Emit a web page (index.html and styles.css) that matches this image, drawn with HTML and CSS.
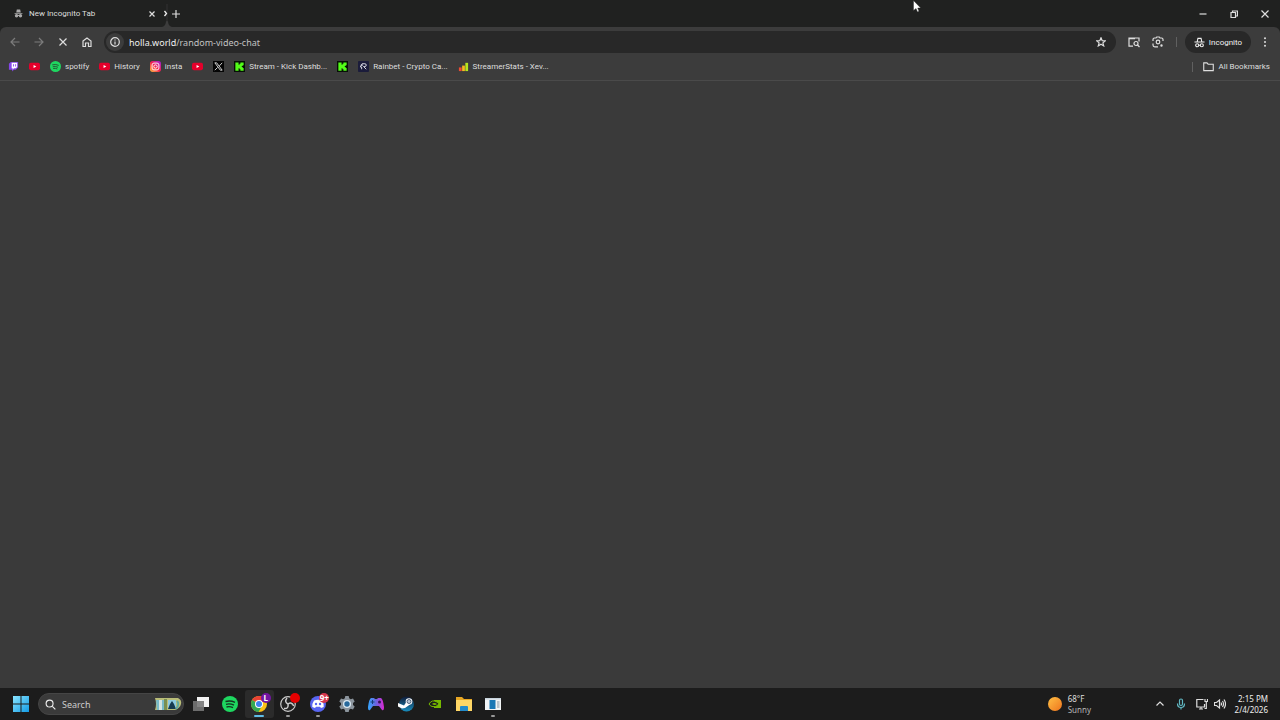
FILE: index.html
```html
<!DOCTYPE html>
<html lang="en">
<head>
    <meta charset="UTF-8">
    <meta name="viewport" content="width=device-width, initial-scale=1.0">
    <title>New Incognito Tab</title>
    <link rel="stylesheet" href="styles.css">
</head>
<body>
    <!-- Tab strip -->
    <header class="tab-strip">
        <div class="tab">
            <svg class="tab-icon" viewBox="0 0 16 16" fill="currentColor"><path d="M5 1h6l1 5H4zM1 7h14v1.500H1z"/><circle cx="4.500" cy="12" r="3"/><circle cx="11.500" cy="12" r="3"/><path d="M6 10.500h4v2H6z"/></svg>
            <span class="tab-title">New Incognito Tab</span>
            <button class="tab-close" aria-label="Close tab"><svg viewBox="0 0 8 8" class="line"><path d="M1.500 1.500l5 5M6.500 1.500l-5 5"/></svg></button>
        </div>
        <svg class="tab-edge" viewBox="0 0 10 27"><path d="M0 27Q4 26 4 21h2Q6 26 10 27z" fill="#3c3c3c"/><path d="M5 4v18" stroke="#333"/><path d="M2.500 11l2 2.500-2 2.500" fill="none" stroke="#eee" stroke-width="1.300"/></svg>
        <button class="new-tab" aria-label="New tab"><svg viewBox="0 0 8 8" class="line"><path d="M4 0v8M0 4h8"/></svg></button>
        <div class="window-buttons">
            <button aria-label="Minimize"><svg viewBox="0 0 8 8" class="line"><path d="M.5 4h7"/></svg></button>
            <button aria-label="Restore"><svg viewBox="0 0 8 8" class="line"><path d="M1 2.500h4.500v5H1zM2.500 2.500v-1.500h5v5h-2"/></svg></button>
            <button aria-label="Close"><svg viewBox="0 0 8 8" class="line"><path d="M.5.5l7 7M7.500.5l-7 7"/></svg></button>
        </div>
    </header>

    <!-- Toolbar -->
    <div class="toolbar">
        <div class="nav-buttons">
            <button class="dim" aria-label="Back"><svg viewBox="0 0 10 10" class="line"><path d="M9.500 5H1M5 1L1 5l4 4"/></svg></button>
            <button class="dim" aria-label="Forward"><svg viewBox="0 0 10 10" class="line"><path d="M.5 5H9M5 1l4 4-4 4"/></svg></button>
            <button aria-label="Stop"><svg viewBox="0 0 10 10" class="line"><path d="M1.500 1.500l7 7M8.500 1.500l-7 7"/></svg></button>
            <button aria-label="Home"><svg viewBox="0 0 10 10" class="line"><path d="M1 4l4-3 4 3v5.500H6.500V6h-3v3.500H1z"/></svg></button>
        </div>
        <div class="address-bar">
            <button class="site-info" aria-label="Site information"><svg viewBox="0 0 10 10" class="line"><circle cx="5" cy="5" r="4.300"/><path d="M5 4.500v3M5 2.500v1"/></svg></button>
            <a class="url" href="#"><b>holla.world</b>/random-video-chat</a>
            <button class="star" aria-label="Bookmark this tab"><svg viewBox="0 0 10 10" class="line"><path d="M5 .8l1.200 2.900 3.100.2-2.400 2 .8 3L5 7.300 2.300 8.900l.8-3-2.400-2 3.100-.2z"/></svg></button>
        </div>
        <div class="actions">
            <button aria-label="Search side panel"><svg viewBox="0 0 12 12" class="line"><path d="M5 10.200H1V2h10v3.500M1 2.600h6"/><circle cx="8" cy="7.500" r="2"/><path d="M9.500 9l2 2"/></svg></button>
            <button aria-label="Google Lens"><svg viewBox="0 0 12 12" class="line"><path d="M1 5V3.500Q1 2 2.500 2H4l.7-1h2.600L8 2h1.500Q11 2 11 3.500V5M1 7.500V9q0 1.800 1.800 1.800H6"/><circle cx="6" cy="6" r="1.800"/><circle cx="9.500" cy="9.500" r=".6"/></svg></button>
            <span class="divider"></span>
            <button class="incognito"><svg viewBox="0 0 12 12" class="line"><path d="M3.500 5l.8-3.500h3.400L8.500 5M.5 5.500h11M5 9h2"/><circle cx="3.500" cy="9" r="1.700"/><circle cx="8.500" cy="9" r="1.700"/></svg>Incognito</button>
            <button class="menu" aria-label="Menu"><svg viewBox="0 0 12 12" fill="currentColor"><circle cx="6" cy="1.500" r="1.200"/><circle cx="6" cy="6" r="1.200"/><circle cx="6" cy="10.500" r="1.200"/></svg></button>
        </div>
    </div>

    <!-- Bookmarks -->
    <nav class="bookmarks">
        <a href="#" aria-label="Twitch"><svg viewBox="0 0 12 12"><path d="M3 1h8v6L8.500 9.500H6.500L4.500 11.500v-2H1V3z" fill="#8547e8"/><path d="M4 2h6v4.500L8.500 8H6.500L5 9.500V8H4z" fill="#fff"/><path d="M6 3.500v2.500M8.300 3.500v2.500" stroke="#8547e8"/></svg></a>
        <a href="#" aria-label="YouTube"><svg viewBox="0 0 12 12"><rect y="2" width="12" height="8" rx="2" fill="#e4002b"/><path d="M5 4.300v3.400L8 6z" fill="#fff"/></svg></a>
        <a href="#"><svg viewBox="0 0 12 12"><circle cx="6" cy="6" r="6" fill="#1ed760"/><path d="M2.500 4.200q4-1 7 .6M3 6.300q3-.8 5.700.5M3.500 8.200q2.500-.6 4.500.5" fill="none" stroke="#244b30"/></svg>spotify</a>
        <a href="#"><svg viewBox="0 0 12 12"><rect y="2" width="12" height="8" rx="2" fill="#e4002b"/><path d="M5 4.300v3.400L8 6z" fill="#fff"/></svg>History</a>
        <a href="#"><svg viewBox="0 0 12 12"><defs><linearGradient id="insta" x1="0" y1="1" x2="1" y2="0"><stop stop-color="#ffc23d"/><stop offset=".5" stop-color="#f5204f"/><stop offset="1" stop-color="#9d22e5"/></linearGradient></defs><rect width="12" height="12" rx="3" fill="url(#insta)"/><rect x="2.300" y="2.300" width="7.400" height="7.400" rx="2" fill="none" stroke="#fff"/><circle cx="6" cy="6" r="1.800" fill="none" stroke="#fff"/></svg>insta</a>
        <a href="#" aria-label="YouTube"><svg viewBox="0 0 12 12"><rect y="2" width="12" height="8" rx="2" fill="#e4002b"/><path d="M5 4.300v3.400L8 6z" fill="#fff"/></svg></a>
        <a href="#" aria-label="X"><svg viewBox="0 0 12 12"><path d="M0 0h12v12H0z" fill="#050505"/><path d="M2 2h2l6 8H8zM10 2L7 5.300M5 7l-3 3" fill="none" stroke="#ddd"/></svg></a>
        <a href="#"><svg viewBox="0 0 12 12"><path d="M0 0h12v12H0z" fill="#071006"/><path d="M1.500 1.500H5v2.500h1V3h1V1.500h3.500v3h-1v1h-1v1h1v1h1v3H7V9H6V8H5v2.500H1.500z" fill="#53fc18"/></svg>Stream - Kick Dashb...</a>
        <a href="#" aria-label="Kick"><svg viewBox="0 0 12 12"><path d="M0 0h12v12H0z" fill="#071006"/><path d="M1.500 1.500H5v2.500h1V3h1V1.500h3.500v3h-1v1h-1v1h1v1h1v3H7V9H6V8H5v2.500H1.500z" fill="#53fc18"/></svg></a>
        <a href="#"><svg viewBox="0 0 12 12"><rect width="12" height="12" rx="1" fill="#1b1c3b"/><path d="M4 9V6.500H2.500L4.500 3h3Q9 3 9 4.500T7.500 6H6l3 3M3 4.500h2.500" fill="none" stroke="#e5e5ee"/></svg>Rainbet - Crypto Ca...</a>
        <a href="#"><svg viewBox="0 0 12 12"><path d="M1 7h3v4H1z" fill="#f04b32"/><path d="M4.500 5h3v6h-3z" fill="#f5b91f"/><path d="M8 2h3v9H8z" fill="#b5e61d"/></svg>StreamerStats - Xev...</a>
        <span class="divider"></span>
        <a class="all-bookmarks" href="#"><svg viewBox="0 0 12 12" class="line"><path d="M.8 2h3.500l1.300 1.500h5.600v7H.8z"/></svg>All Bookmarks</a>
    </nav>

    <!-- Blank page while loading -->
    <main class="page"></main>

    <!-- Taskbar -->
    <footer class="taskbar">
        <button class="start" aria-label="Start"><svg viewBox="0 0 16 16"><defs><linearGradient id="win" x2="1" y2="1"><stop stop-color="#8ae5ff"/><stop offset="1" stop-color="#139be5"/></linearGradient></defs><path d="M0 0h7.500v7.500H0zM8.500 0H16v7.500H8.500zM0 8.500h7.500V16H0zM8.500 8.500H16V16H8.500z" fill="url(#win)"/></svg></button>
        <label class="search">
            <svg class="search-icon line" viewBox="0 0 12 12"><circle cx="5" cy="5" r="3.800"/><path d="M8 8l3.300 3.300"/></svg>
            <input type="text" placeholder="Search" aria-label="Search">
            <svg class="search-art" viewBox="0 0 28 14"><path d="M1 1h23q4 2 3 6t-6 6H1q2-6 0-12z" fill="#b9bd78"/><path d="M2 3h10v10H3z" fill="#78b9c7"/><path d="M5 3h3v10H5z" fill="#d4e4df"/><path d="M10 2h3v11h-3z" fill="#788f50"/><path d="M14 3h8v9h-8z" fill="#8ecae0"/><path d="M18 4l2 3 2 5h-8l2-5z" fill="#173a50"/><path d="M23 4q3 3-1 8" stroke="#5fa8a0" stroke-width="2" fill="none"/></svg>
        </label>
        <div class="apps">
            <button aria-label="Task view"><svg viewBox="0 0 18 18"><path d="M5 2h12v10H5z" fill="#f2f2f2"/><path d="M1 6h11v10H1z" fill="#777" opacity=".9"/></svg></button>
            <button aria-label="Spotify"><svg viewBox="0 0 18 18"><circle cx="9" cy="9" r="8" fill="#1ed760"/><path d="M4.500 6.500q5-1.300 9.500.8M5 9.300q4-1 8 .8M5.500 12q3.500-.8 6.500.7" fill="none" stroke="#14351f" stroke-width="1.300"/></svg></button>
            <button class="active" aria-label="Chrome"><svg viewBox="0 0 18 18"><circle cx="9" cy="9" r="8" fill="#fbc116"/><path d="M9 9L2.100 5A8 8 0 0 1 15.900 5z" fill="#e94235"/><path d="M9 9L2.100 5A8 8 0 0 0 8.500 17L12 11z" fill="#34a853"/><path d="M9 5h6.900l-1-1.500H9z" fill="#e94235"/><circle cx="9" cy="9" r="4" fill="#fff"/><circle cx="9" cy="9" r="3" fill="#3c82ef"/></svg><span class="badge purple">L</span></button>
            <button class="open" aria-label="OBS Studio"><svg viewBox="0 0 18 18"><circle cx="9" cy="9" r="7.300" fill="#222" stroke="#ccc" stroke-width="1.200"/><g fill="none" stroke="#ccc" stroke-width="1.500"><path d="M8 3q-3 4 1 6"/><path d="M14.700 11q-2-4.500-5.700-2"/><path d="M5 13.500q5 .5 4-4.500"/></g></svg><span class="badge red"></span></button>
            <button class="open" aria-label="Discord"><svg viewBox="0 0 18 18"><circle cx="9" cy="9" r="8" fill="#5865f2"/><path d="M5 5.500q4-1.500 8 0 2 3 1.700 6.500L12 13l-1-1.300H7L6 13l-2.700-1Q3 8.500 5 5.500z" fill="#fff"/><circle cx="7" cy="9" r="1.200" fill="#5865f2"/><circle cx="11" cy="9" r="1.200" fill="#5865f2"/></svg><span class="badge count">9+</span></button>
            <button aria-label="Settings"><svg viewBox="0 0 18 18"><path d="M7.300 1h3.400l.5 2.300 1.500.9 2.300-.7 1.700 3-1.700 1.600v1.800l1.700 1.600-1.700 3-2.300-.7-1.500.9-.5 2.300H7.300l-.5-2.300-1.500-.9-2.300.7-1.700-3L3 9.900V8.100L1.300 6.500l1.700-3 2.300.7 1.500-.9z" fill="#8b949c"/><circle cx="9" cy="9" r="4" fill="#dce9f2"/><circle cx="9" cy="9" r="2.700" fill="#27699c"/></svg></button>
            <button aria-label="Controller"><svg viewBox="0 0 18 18"><defs><linearGradient id="pad"><stop stop-color="#35a8ff"/><stop offset=".5" stop-color="#6965df"/><stop offset="1" stop-color="#dd27d2"/></linearGradient></defs><path d="M4 3h3l1 1h2l1-1h3q2 1 3 9 0 4-2 3l-3-4H6l-3 4q-2 1-2-3 1-8 3-9z" fill="url(#pad)"/><path d="M5.500 5v4M3.500 7h4" stroke="#173d79"/><circle cx="12.500" cy="7" r="1.500" fill="#351458"/></svg></button>
            <button aria-label="Steam"><svg viewBox="0 0 18 18"><defs><linearGradient id="steam" x2="0" y2="1"><stop stop-color="#101b38"/><stop offset="1" stop-color="#188dbe"/></linearGradient></defs><circle cx="9.500" cy="9" r="7.500" fill="url(#steam)"/><path d="M1 8l6 2.500 3-4.500 3 3.500-5 3.500-3 .5-4-2z" fill="#fff"/><circle cx="12" cy="6.500" r="3.300" fill="#fff"/><circle cx="12" cy="6.500" r="2" fill="#b9c8d5" stroke="#203454" stroke-width=".7"/></svg></button>
            <button aria-label="NVIDIA"><svg viewBox="0 0 18 18"><path d="M8 5h7v8H8z" fill="#76b900"/><path d="M3 9q3-5 8-2 2 1 2 2-3 4-7 2.500Q4 11 3 9z" fill="#1c1c1c" stroke="#76b900"/><path d="M6 9q2-2 5 0-2 2-5 0" fill="#76b900"/></svg></button>
            <button aria-label="File Explorer"><svg viewBox="0 0 18 18"><path d="M1 2h6l2 2h8v12H1z" fill="#e7a724"/><path d="M1 5h16v11H1z" fill="#ffd766"/><path d="M5 16v-4q0-1 1-1h6q1 0 1 1v4z" fill="#238bcb"/></svg></button>
            <button class="open" aria-label="App window"><svg viewBox="0 0 18 18"><path d="M1 3h16v12H1z" fill="#f1f4f5"/><path d="M1 3h16v1.500H1z" fill="#c6d3dc"/><path d="M5.500 5h6v9h-6z" fill="#1978b5"/><path d="M13 6h2.500v7H13z" fill="#bac5cc"/></svg></button>
        </div>
        <a class="weather" href="#">
            <svg viewBox="0 0 14 14"><defs><linearGradient id="sun" x2="1" y2="1"><stop stop-color="#ffc044"/><stop offset="1" stop-color="#ee741d"/></linearGradient></defs><circle cx="7" cy="7" r="7" fill="url(#sun)"/></svg>
            <span>68°F<br><span class="muted">Sunny</span></span>
        </a>
        <div class="tray">
            <button aria-label="Show hidden icons"><svg viewBox="0 0 12 12" class="line"><path d="M2.500 7.500L6 4l3.500 3.500"/></svg></button>
            <button class="mic" aria-label="Microphone"><svg viewBox="0 0 12 12" class="line"><rect x="4.500" y="1" width="3" height="6.500" rx="1.500"/><path d="M2.500 5.500q0 4 3.500 4t3.500-4M6 9.500v2"/></svg></button>
            <button aria-label="Network"><svg viewBox="0 0 12 12" class="line"><path d="M7.500 1.500H.8v7.500h7.700V6M3 11h4M5 9v2M9 1v2.500h2.500V1M10.300 3.500v7H8.500"/></svg></button>
            <button aria-label="Volume"><svg viewBox="0 0 12 12" class="line"><path d="M.5 4.500h2L5.500 2v8l-3-2.500h-2zM7 4.500q1 1.500 0 3M8.500 3q2 3 0 6M10 1.500q3 4.500 0 9"/></svg></button>
        </div>
        <div class="clock">2:15 PM<br>2/4/2026</div>
    </footer>

    <svg class="cursor" viewBox="0 0 8 13"><path d="M.5.5v10L3 8.500 4.500 12l1.500-.7L4.700 8h3z" fill="#fff" stroke="#222" stroke-width=".4"/></svg>
</body>
</html>
```
FILE: styles.css
```css
* {
    box-sizing: border-box;
}

body {
    margin: 0;
    height: 100vh;
    overflow: hidden;
    display: flex;
    flex-direction: column;
    font-family: Roboto, "Noto Sans", sans-serif;
    font-size: 8px;
    line-height: 11px;
    color: #dedede;
    background-color: #202120;
}

button {
    display: flex;
    align-items: center;
    justify-content: center;
    margin: 0;
    padding: 0;
    border: none;
    background: none;
    color: inherit;
    font: inherit;
}

a {
    color: inherit;
    text-decoration: none;
}

svg {
    display: block;
    flex: none;
}

.line {
    fill: none;
    stroke: currentColor;
    stroke-width: 1.2;
}

/* Tab strip */
.tab-strip {
    display: flex;
    align-items: center;
    height: 27px;
}

.tab {
    display: flex;
    align-items: center;
    width: 162px;
    padding: 0 6px 0 14px;
    gap: 6px;
}

.tab-icon {
    width: 9px;
    height: 9px;
    color: #aaa;
}

.tab-title {
    flex: 1;
    white-space: nowrap;
}

.tab-close svg {
    width: 8px;
    height: 8px;
}

.tab-edge {
    width: 10px;
    height: 27px;
}

.new-tab svg {
    width: 8px;
    height: 8px;
}

.window-buttons {
    display: flex;
    margin-left: auto;
}

.window-buttons button {
    width: 31px;
    height: 27px;
}

.window-buttons svg {
    width: 8px;
    height: 8px;
}

/* Toolbar */
.toolbar {
    display: flex;
    align-items: center;
    height: 30px;
    padding: 0 6px 0 3px;
    background-color: #3c3c3c;
    border-radius: 6px 6px 0 0;
}

.nav-buttons {
    display: flex;
}

.nav-buttons button {
    width: 24px;
    height: 24px;
}

.nav-buttons svg {
    width: 10px;
    height: 10px;
}

.dim {
    color: #7c7c7c;
}

.address-bar {
    flex: 1;
    display: flex;
    align-items: center;
    height: 22px;
    margin-left: 5px;
    padding: 0 10px 0 2px;
    border-radius: 11px;
    background-color: #282828;
}

.site-info {
    width: 18px;
    height: 18px;
    border-radius: 50%;
    background-color: #3c3c3c;
}

.address-bar svg {
    width: 10px;
    height: 10px;
}

.url {
    flex: 1;
    margin-left: 5px;
    font-family: "Noto Sans", sans-serif;
    font-size: 9px;
    color: #c2c2c2;
}

.url b {
    font-weight: normal;
    color: #f0f0f0;
}

.actions {
    display: flex;
    align-items: center;
}

.actions button {
    width: 24px;
    height: 22px;
}

.actions button:first-child {
    margin-left: 6px;
}

.actions svg {
    width: 12px;
    height: 12px;
}

.divider {
    width: 1px;
    height: 10px;
    background-color: #606060;
}

.actions .divider {
    margin: 0 8px 0 6px;
}

.actions .incognito {
    width: 66px;
    gap: 4px;
    border-radius: 11px;
    background-color: #282828;
    color: #f0f0f0;
}

.actions .incognito svg {
    width: 11px;
    height: 11px;
}

.actions .menu {
    width: 18px;
    margin-left: 5px;
}

.actions .menu svg {
    width: 10px;
    height: 10px;
}

/* Bookmarks */
.bookmarks {
    display: flex;
    align-items: center;
    gap: 10px;
    height: 24px;
    padding: 0 10px 4px 8px;
    background-color: #3c3c3c;
    border-bottom: 1px solid #4a4a4a;
}

.bookmarks a {
    display: flex;
    align-items: center;
    gap: 4px;
    white-space: nowrap;
}

.bookmarks svg {
    width: 11px;
    height: 11px;
}

.bookmarks .divider {
    margin-left: auto;
}

.page {
    flex: 1;
    background-color: #3a3a3a;
}

/* Taskbar */
.taskbar {
    display: flex;
    align-items: center;
    height: 32px;
    padding: 0 12px 0 8px;
    font-family: "Noto Sans", sans-serif;
    background-color: #1c1c1c;
}

.start {
    width: 26px;
    height: 28px;
}

.start svg {
    width: 16px;
    height: 16px;
}

.search {
    display: flex;
    align-items: center;
    width: 146px;
    height: 22px;
    margin-left: 4px;
    padding: 0 1px 0 6px;
    gap: 6px;
    border: 1px solid #454545;
    border-radius: 11px;
    background-color: #3a3a3a;
}

.search-icon {
    width: 11px;
    height: 11px;
    color: #eee;
}

.search input {
    flex: 1;
    min-width: 0;
    padding: 0;
    border: none;
    outline: none;
    background: none;
    color: #ddd;
    font-family: inherit;
    font-size: 9px;
}

.search input::placeholder {
    color: #ccc;
}

.search-art {
    width: 28px;
    height: 14px;
}

.apps {
    display: grid;
    grid-template-columns: repeat(11, 1fr);
    width: 322px;
    margin-left: 2px;
}

.apps button {
    position: relative;
    height: 28px;
}

.apps svg {
    width: 18px;
    height: 18px;
}

.apps .active {
    border-radius: 3px;
    background-color: #2b2b2b;
}

.active::after,
.open::after {
    content: "";
    position: absolute;
    bottom: 1px;
    left: 50%;
    width: 4px;
    height: 2px;
    margin-left: -2px;
    border-radius: 1px;
    background-color: #999;
}

.active::after {
    width: 10px;
    margin-left: -5px;
    background-color: #60bde8;
}

.badge {
    position: absolute;
    top: 3px;
    right: 3px;
    width: 10px;
    height: 10px;
    border-radius: 50%;
    color: #fff;
    font-size: 8px;
    font-weight: bold;
    line-height: 10px;
    text-align: center;
}

.purple {
    background-color: #7414a3;
}

.red {
    background-color: #e60000;
}

.count {
    background-color: #d6364c;
}

.weather {
    display: flex;
    align-items: center;
    gap: 6px;
    margin-left: auto;
}

.weather svg {
    width: 14px;
    height: 14px;
}

.muted {
    color: #b5b5b5;
}

.tray {
    display: flex;
    align-items: center;
    margin-left: 60px;
}

.tray button {
    width: 18px;
    height: 28px;
}

.tray svg {
    width: 12px;
    height: 12px;
}

.tray .mic {
    margin: 0 3px;
    color: #62b9c4;
}

.clock {
    width: 39px;
    text-align: right;
    color: #eee;
}

/* Mouse pointer over the tab strip */
.cursor {
    position: absolute;
    top: 0;
    left: 913px;
    width: 8px;
    height: 13px;
}
```
